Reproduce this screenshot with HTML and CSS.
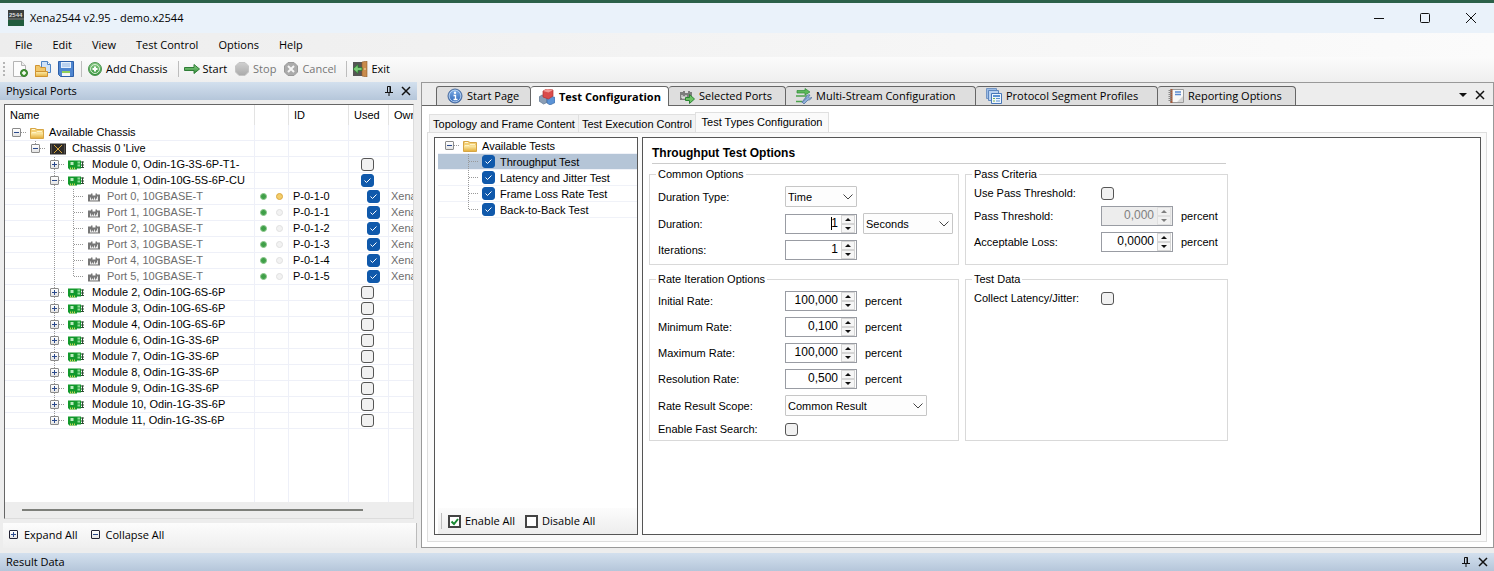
FILE: index.html
```
<!DOCTYPE html>
<html lang="en">
<head>
<meta charset="utf-8">
<title>Xena2544 v2.95 - demo.x2544</title>
<link rel="stylesheet" href="styles.css">
</head>
<body>
<svg class="sprite" aria-hidden="true">
  <defs>
    <linearGradient id="gGold" x1="0" y1="0" x2="0" y2="1"><stop offset="0" stop-color="#fdeeb0"/><stop offset="1" stop-color="#e6b23f"/></linearGradient>
    <linearGradient id="gGreen" x1="0" y1="0" x2="0" y2="1"><stop offset="0" stop-color="#8fce8a"/><stop offset="1" stop-color="#2f8f37"/></linearGradient>
    <linearGradient id="gBlue" x1="0" y1="0" x2="0" y2="1"><stop offset="0" stop-color="#7fb0ea"/><stop offset="1" stop-color="#2c62b4"/></linearGradient>
    <linearGradient id="gGrey" x1="0" y1="0" x2="0" y2="1"><stop offset="0" stop-color="#cfcfcf"/><stop offset="1" stop-color="#aaaaaa"/></linearGradient>
  </defs>
  <symbol id="i-new" viewBox="0 0 16 16"><path d="M1.500 .5h8l4 4v11h-12z" fill="#fcfcfc" stroke="#b4b4b4"/><path d="M9.500 .5v4h4" fill="#eee" stroke="#b4b4b4"/><circle cx="12" cy="12" r="3.500" fill="#4d9a3b" stroke="#2f7a28"/><path d="M12 10v4M10 12h4" stroke="#fff" stroke-width="1.500"/></symbol>
  <symbol id="i-open" viewBox="0 0 16 16"><path d="M6.500 .5h6l3 3v8h-9z" fill="#cfe2f8" stroke="#4d83c4"/><path d="M12.500 .5v3h3" fill="#fff" stroke="#4d83c4"/><path d="M.5 15.500v-11h4l1 2h5v9z" fill="#f2c76a" stroke="#d09432"/><path d="M.5 15.500v-5h12v5z" fill="url(#gGold)" stroke="#d09432"/></symbol>
  <symbol id="i-save" viewBox="0 0 16 16"><path d="M.5 .5h15v15h-13l-2-2z" fill="#4f86d0" stroke="#2d5fa8"/><path d="M3 1h10v6H3z" fill="#e5effb"/><path d="M4 3h8M4 5h8" stroke="#8fb4e4"/><path d="M4 10h8v5H4z" fill="#f4f6f8"/><path d="M4 10h8v2H4z" fill="#8fcf5a"/></symbol>
  <symbol id="i-add" viewBox="0 0 16 16"><circle cx="8" cy="8" r="6.500" fill="url(#gGreen)" stroke="#4d9552"/><circle cx="8" cy="8" r="4.500" fill="none" stroke="#d9efd6"/><path d="M8 5.500v5M5.500 8h5" stroke="#fff" stroke-width="2"/></symbol>
  <symbol id="i-start" viewBox="0 0 16 16"><path d="M.5 6.500h9.500v-3l5.500 4.500-5.500 4.500v-3H.5z" fill="url(#gGreen)" stroke="#2f7d36"/></symbol>
  <symbol id="i-stop" viewBox="0 0 16 16"><path d="M5 1.500h6l3.500 3.500v6l-3.500 3.500H5L1.500 11V5z" fill="url(#gGrey)" stroke="#c4c4c4"/></symbol>
  <symbol id="i-cancel" viewBox="0 0 16 16"><path d="M5 1.500h6l3.500 3.500v6l-3.500 3.500H5L1.500 11V5z" fill="#ababab" stroke="#999"/><path d="M5 5l6 6M11 5l-6 6" stroke="#f5f5f5" stroke-width="2"/></symbol>
  <symbol id="i-exit" viewBox="0 0 16 16"><path d="M1 1h9v14H1z" fill="#555"/><path d="M10 1l5-1v16l-5-1z" fill="#c98b4c" stroke="#8d5a28" stroke-width=".6"/><path d="M13 7v2" stroke="#f7e2a8"/><path d="M10 6.500H6V3.500L1 8l5 4.500v-3h4z" fill="#7ccb78" stroke="#2a7a31" stroke-width=".8"/></symbol>
  <symbol id="i-folder" viewBox="0 0 16 14"><path d="M1.500 12.500V2.500h5l1.500 1H14.500V12.500z" fill="#f3cf74" stroke="#d6a544"/><path d="M3 3.500h3" stroke="#fff6d5"/><path d="M2 6.500h12V12H2z" fill="url(#gGold)"/><path d="M3 6.500h4l1-1h5" fill="none" stroke="#fff3c4"/></symbol>
  <symbol id="i-chassis" viewBox="0 0 16 11"><path d="M0 0h16v11H0z" fill="#2d2a28"/><path d="M4 1.500l8 8M12 1.500l-8 8" stroke="#d6a53a"/><path d="M1.500 1v9M14.500 1v9" stroke="#575350"/></symbol>
  <symbol id="i-card" viewBox="0 0 16 9"><path d="M0 0h13v8H9v1H1V8H0z" fill="#12992c"/><path d="M2.500 1.500h3v3h-3z" fill="#bdecc0"/><path d="M2.500 7v2M4.500 7v2M6.500 7v2" stroke="#c9d95a"/><path d="M9.500 1h2.500v2H9.500zM9.500 4h2.500v2H9.500z" fill="#8bdc94"/><path d="M13 1.500h3M13 4.500h3M13 7h3M14.500 1v6.500" stroke="#2c4a31"/></symbol>
  <symbol id="i-port" viewBox="0 0 12 9"><path d="M0 2h3V1h1.500v2h3V1H9v1h3v7H0z" fill="#777"/><path d="M2.500 7.500V5M4.500 7.500V6M6.500 7.500V5M8.500 7.500V6M9.500 7.500V4M2 7.500h8" stroke="#fff" stroke-width=".8"/></symbol>
  <symbol id="i-info" viewBox="0 0 16 16"><circle cx="8" cy="8" r="7" fill="url(#gBlue)" stroke="#4c6c9c"/><circle cx="8" cy="8" r="5.800" fill="none" stroke="#c4d9f3" stroke-width=".8"/><circle cx="8" cy="4.800" r="1.200" fill="#fff"/><path d="M6.500 7.500H8.500V11.500M6.500 11.500h4" fill="none" stroke="#fff" stroke-width="1.300"/></symbol>
  <symbol id="i-cubes" viewBox="0 0 16 16"><path d="M0 8l3-2 5 1.500v6L4.500 15 0 12z" fill="#8a9db5" stroke="#60758f" stroke-width=".7"/><path d="M8 9l4-2 4 1.500v5L11 16l-3-2z" fill="#5b93d6" stroke="#3a69a3" stroke-width=".7"/><path d="M4 2l4-2 6 1v6l-4.500 3L4 8z" fill="#d94b4b" stroke="#b53030" stroke-width=".7"/><path d="M4 2l5.500 1.500L14 1 8 0z" fill="#f19a95"/></symbol>
  <symbol id="i-ports" viewBox="0 0 16 16"><path d="M1 4h3V3h2v2h3V3h2v1h2v8H1z" fill="#7d7d7d"/><path d="M3 10V7M5 10V8M7 10V7M3 10h5" stroke="#fff"/><path d="M6.500 9.500h4v-3l5 4.500-5 4.500v-3h-4z" fill="#6cc163" stroke="#2b8632"/></symbol>
  <symbol id="i-streams" viewBox="0 0 16 16"><path d="M1 2.500h8v-2l5 3.500-5 3V5H1z" fill="#5cb95a" stroke="#2e8a36" stroke-width=".7"/><path d="M0 8h12M0 13.500h6" stroke="#4da34d" stroke-width="1.500"/><path d="M6 14.500l5-5M10 9a3 3 0 0 1 4-2l-1.500 2 1.500 1.500 1.500-1.500A3 3 0 0 1 12 12l-4 4-2-2z" fill="#8fb0db" stroke="#55759f" stroke-width=".8"/></symbol>
  <symbol id="i-segments" viewBox="0 0 16 16"><path d="M.5 .5h10v10H.5z" fill="#9dbde6" stroke="#7395c4"/><path d="M2.500 2.500h10v10h-10z" fill="#b9d2f1" stroke="#5e87bf"/><path d="M5.500 5.500h10v10h-10z" fill="#eef5fd" stroke="#4677b8"/><path d="M7 8h7" stroke="#5c91d1" stroke-width="2"/><path d="M7 10.500h2M7 13h2" stroke="#75b451"/><path d="M10 10.500h4M10 13h4" stroke="#5c91d1"/></symbol>
  <symbol id="i-report" viewBox="0 0 16 16"><path d="M2.500 1.500h13v13h-13z" fill="#f8f8f8" stroke="#9a9a9a"/><path d="M3.500 1v14" stroke="#a35a3a" stroke-width="2"/><path d="M.5 2.500h3M.5 4.500h3M.5 6.500h3M.5 8.500h3M.5 10.500h3M.5 12.500h3" stroke="#888"/><path d="M7 4h6M7 6.500h6" stroke="#5b8ad0" stroke-width="1.500"/><path d="M9 14l6-6v6z" fill="#d5d5d5"/></symbol>
  <symbol id="i-pin" viewBox="0 0 8 10"><path d="M2.500 6V.5h3V6" fill="none" stroke="#111"/><path d="M5 .5V6M0 6.500h8M4 7v3" stroke="#111"/></symbol>
  <symbol id="i-x" viewBox="0 0 10 10"><path d="M1 1l8 8M9 1l-8 8" stroke="#111" stroke-width="1.500"/></symbol>
</svg>

<header class="titlebar">
  <svg class="app-icon" viewBox="0 0 16 16" role="img" aria-label="Xena2544"><path d="M0 0h16v16H0z" fill="#3c3f3e"/><path d="M0 10h16v6H0z" fill="#215c3e"/><path d="M0 9h16" stroke="#79837c"/><text x="1" y="7" class="app-icon-text">2544</text></svg>
  <h1 class="app-title">Xena2544 v2.95 - demo.x2544</h1>
  <div class="window-buttons">
    <button class="plain" aria-label="Minimize"><svg width="12" height="12"><path d="M1 6.500h10" stroke="#111"/></svg></button>
    <button class="plain" aria-label="Maximize"><svg width="12" height="12"><rect x="1.500" y="1.500" width="9" height="9" rx="1" fill="none" stroke="#111"/></svg></button>
    <button class="plain" aria-label="Close"><svg width="12" height="12"><path d="M1 1l10 10M11 1L1 11" stroke="#111"/></svg></button>
  </div>
</header>

<nav class="menubar">
  <button class="plain">File</button><button class="plain">Edit</button><button class="plain">View</button><button class="plain">Test Control</button><button class="plain">Options</button><button class="plain">Help</button>
</nav>

<div class="toolbar">
  <span class="grip"></span>
  <button class="plain tool" aria-label="New"><svg class="icon16"><use href="#i-new"/></svg></button>
  <button class="plain tool" aria-label="Open"><svg class="icon16"><use href="#i-open"/></svg></button>
  <button class="plain tool" aria-label="Save"><svg class="icon16"><use href="#i-save"/></svg></button>
  <span class="sep"></span>
  <button class="plain tool"><svg class="icon16"><use href="#i-add"/></svg>Add Chassis</button>
  <span class="sep wide"></span>
  <button class="plain tool"><svg class="icon16"><use href="#i-start"/></svg>Start</button>
  <button class="plain tool" disabled><svg class="icon16"><use href="#i-stop"/></svg>Stop</button>
  <button class="plain tool" disabled><svg class="icon16"><use href="#i-cancel"/></svg>Cancel</button>
  <span class="sep wide"></span>
  <button class="plain tool"><svg class="icon16"><use href="#i-exit"/></svg>Exit</button>
</div>

<main class="workspace">
  <section class="ports-panel">
    <div class="dock-bar"><h2>Physical Ports</h2><button class="plain" aria-label="Pin"><svg class="pin"><use href="#i-pin"/></svg></button><button class="plain" aria-label="Close"><svg class="cross"><use href="#i-x"/></svg></button></div>
    <div class="ports-box">
      <div class="ports-view">
        <table class="ports">
          <colgroup><col class="c-name"><col class="c-led"><col class="c-id"><col class="c-used"><col class="c-owner"></colgroup>
          <thead><tr><th>Name</th><th></th><th>ID</th><th>Used</th><th>Owner</th></tr></thead>
          <tbody>
            <tr><td><div class="node"><span class="g h"><button class="exp" aria-label="Collapse"></button></span><svg class="ic folder"><use href="#i-folder"/></svg>Available Chassis</div></td><td></td><td></td><td></td><td></td></tr>
            <tr><td><div class="node"><span class="g"></span><span class="g h vt"><button class="exp" aria-label="Collapse"></button></span><svg class="ic chassis"><use href="#i-chassis"/></svg>Chassis 0 'Live</div></td><td></td><td></td><td></td><td></td></tr>
            <tr><td><div class="node"><span class="g"></span><span class="g"></span><span class="g h v"><button class="exp plus" aria-label="Expand"></button></span><svg class="ic card"><use href="#i-card"/></svg>Module 0, Odin-1G-3S-6P-T1-</div></td><td></td><td></td><td><input type="checkbox" class="cb" aria-label="Use Module 0"></td><td></td></tr>
            <tr><td><div class="node"><span class="g"></span><span class="g"></span><span class="g h v"><button class="exp" aria-label="Collapse"></button></span><svg class="ic card"><use href="#i-card"/></svg>Module 1, Odin-10G-5S-6P-CU</div></td><td></td><td></td><td><input type="checkbox" class="cb" checked aria-label="Use Module 1"></td><td></td></tr>
            <tr class="port"><td><div class="node"><span class="g"></span><span class="g"></span><span class="g v"></span><span class="g h v"></span><svg class="ic jack"><use href="#i-port"/></svg>Port 0, 10GBASE-T</div></td><td><span class="leds"><i class="led green"></i><i class="led amber"></i></span></td><td class="pid">P-0-1-0</td><td><input type="checkbox" class="cb" checked aria-label="Use Port 0"></td><td>Xena</td></tr>
            <tr class="port"><td><div class="node"><span class="g"></span><span class="g"></span><span class="g v"></span><span class="g h v"></span><svg class="ic jack"><use href="#i-port"/></svg>Port 1, 10GBASE-T</div></td><td><span class="leds"><i class="led green"></i><i class="led"></i></span></td><td class="pid">P-0-1-1</td><td><input type="checkbox" class="cb" checked aria-label="Use Port 1"></td><td>Xena</td></tr>
            <tr class="port"><td><div class="node"><span class="g"></span><span class="g"></span><span class="g v"></span><span class="g h v"></span><svg class="ic jack"><use href="#i-port"/></svg>Port 2, 10GBASE-T</div></td><td><span class="leds"><i class="led green"></i><i class="led"></i></span></td><td class="pid">P-0-1-2</td><td><input type="checkbox" class="cb" checked aria-label="Use Port 2"></td><td>Xena</td></tr>
            <tr class="port"><td><div class="node"><span class="g"></span><span class="g"></span><span class="g v"></span><span class="g h v"></span><svg class="ic jack"><use href="#i-port"/></svg>Port 3, 10GBASE-T</div></td><td><span class="leds"><i class="led green"></i><i class="led"></i></span></td><td class="pid">P-0-1-3</td><td><input type="checkbox" class="cb" checked aria-label="Use Port 3"></td><td>Xena</td></tr>
            <tr class="port"><td><div class="node"><span class="g"></span><span class="g"></span><span class="g v"></span><span class="g h v"></span><svg class="ic jack"><use href="#i-port"/></svg>Port 4, 10GBASE-T</div></td><td><span class="leds"><i class="led green"></i><i class="led"></i></span></td><td class="pid">P-0-1-4</td><td><input type="checkbox" class="cb" checked aria-label="Use Port 4"></td><td>Xena</td></tr>
            <tr class="port"><td><div class="node"><span class="g"></span><span class="g"></span><span class="g v"></span><span class="g h vt"></span><svg class="ic jack"><use href="#i-port"/></svg>Port 5, 10GBASE-T</div></td><td><span class="leds"><i class="led green"></i><i class="led"></i></span></td><td class="pid">P-0-1-5</td><td><input type="checkbox" class="cb" checked aria-label="Use Port 5"></td><td>Xena</td></tr>
            <tr><td><div class="node"><span class="g"></span><span class="g"></span><span class="g h v"><button class="exp plus" aria-label="Expand"></button></span><svg class="ic card"><use href="#i-card"/></svg>Module 2, Odin-10G-6S-6P</div></td><td></td><td></td><td><input type="checkbox" class="cb" aria-label="Use Module 2"></td><td></td></tr>
            <tr><td><div class="node"><span class="g"></span><span class="g"></span><span class="g h v"><button class="exp plus" aria-label="Expand"></button></span><svg class="ic card"><use href="#i-card"/></svg>Module 3, Odin-10G-6S-6P</div></td><td></td><td></td><td><input type="checkbox" class="cb" aria-label="Use Module 3"></td><td></td></tr>
            <tr><td><div class="node"><span class="g"></span><span class="g"></span><span class="g h v"><button class="exp plus" aria-label="Expand"></button></span><svg class="ic card"><use href="#i-card"/></svg>Module 4, Odin-10G-6S-6P</div></td><td></td><td></td><td><input type="checkbox" class="cb" aria-label="Use Module 4"></td><td></td></tr>
            <tr><td><div class="node"><span class="g"></span><span class="g"></span><span class="g h v"><button class="exp plus" aria-label="Expand"></button></span><svg class="ic card"><use href="#i-card"/></svg>Module 6, Odin-1G-3S-6P</div></td><td></td><td></td><td><input type="checkbox" class="cb" aria-label="Use Module 6"></td><td></td></tr>
            <tr><td><div class="node"><span class="g"></span><span class="g"></span><span class="g h v"><button class="exp plus" aria-label="Expand"></button></span><svg class="ic card"><use href="#i-card"/></svg>Module 7, Odin-1G-3S-6P</div></td><td></td><td></td><td><input type="checkbox" class="cb" aria-label="Use Module 7"></td><td></td></tr>
            <tr><td><div class="node"><span class="g"></span><span class="g"></span><span class="g h v"><button class="exp plus" aria-label="Expand"></button></span><svg class="ic card"><use href="#i-card"/></svg>Module 8, Odin-1G-3S-6P</div></td><td></td><td></td><td><input type="checkbox" class="cb" aria-label="Use Module 8"></td><td></td></tr>
            <tr><td><div class="node"><span class="g"></span><span class="g"></span><span class="g h v"><button class="exp plus" aria-label="Expand"></button></span><svg class="ic card"><use href="#i-card"/></svg>Module 9, Odin-1G-3S-6P</div></td><td></td><td></td><td><input type="checkbox" class="cb" aria-label="Use Module 9"></td><td></td></tr>
            <tr><td><div class="node"><span class="g"></span><span class="g"></span><span class="g h v"><button class="exp plus" aria-label="Expand"></button></span><svg class="ic card"><use href="#i-card"/></svg>Module 10, Odin-1G-3S-6P</div></td><td></td><td></td><td><input type="checkbox" class="cb" aria-label="Use Module 10"></td><td></td></tr>
            <tr><td><div class="node"><span class="g"></span><span class="g"></span><span class="g h vt"><button class="exp plus" aria-label="Expand"></button></span><svg class="ic card"><use href="#i-card"/></svg>Module 11, Odin-1G-3S-6P</div></td><td></td><td></td><td><input type="checkbox" class="cb" aria-label="Use Module 11"></td><td></td></tr>
            <tr class="fill"><td></td><td></td><td></td><td></td><td></td></tr>
          </tbody>
        </table>
      </div>
      <div class="hscroll"><div class="thumb"></div></div>
    </div>
    <div class="tree-bar">
      <button class="plain tool"><span class="exp dark plus"></span>Expand All</button>
      <button class="plain tool"><span class="exp dark"></span>Collapse All</button>
    </div>
  </section>

  <section class="doc-panel">
    <div class="tabs">
      <button class="tab t-start"><svg class="icon16"><use href="#i-info"/></svg>Start Page</button>
      <button class="tab t-config active"><svg class="icon16"><use href="#i-cubes"/></svg>Test Configuration</button>
      <button class="tab t-ports"><svg class="icon16"><use href="#i-ports"/></svg>Selected Ports</button>
      <button class="tab t-multi"><svg class="icon16"><use href="#i-streams"/></svg>Multi-Stream Configuration</button>
      <button class="tab t-proto"><svg class="icon16"><use href="#i-segments"/></svg>Protocol Segment Profiles</button>
      <button class="tab t-report"><svg class="icon16"><use href="#i-report"/></svg>Reporting Options</button>
      <span class="tab-actions">
        <button class="plain" aria-label="Tab list"><svg width="8" height="4"><path d="M0 0h8L4 4z" fill="#111"/></svg></button>
        <button class="plain" aria-label="Close"><svg class="cross"><use href="#i-x"/></svg></button>
      </span>
    </div>
    <div class="doc-body">
      <div class="subtabs">
        <button class="subtab s-topo">Topology and Frame Content</button><button class="subtab s-exec">Test Execution Control</button><button class="subtab s-types active">Test Types Configuration</button>
      </div>
      <div class="page">
        <div class="tests">
          <div class="test-list">
            <div class="node"><span class="g h"><button class="exp" aria-label="Collapse"></button></span><svg class="ic folder"><use href="#i-folder"/></svg>Available Tests</div>
            <label class="node selected"><span class="g"></span><span class="g h v"></span><input type="checkbox" class="cb" checked>Throughput Test</label>
            <label class="node"><span class="g"></span><span class="g h v"></span><input type="checkbox" class="cb" checked>Latency and Jitter Test</label>
            <label class="node"><span class="g"></span><span class="g h v"></span><input type="checkbox" class="cb" checked>Frame Loss Rate Test</label>
            <label class="node"><span class="g"></span><span class="g h vt"></span><input type="checkbox" class="cb" checked>Back-to-Back Test</label>
          </div>
          <div class="test-bar">
            <span class="sep"></span>
            <button class="plain tool"><svg width="13" height="13"><path d="M1 1h11v11H1z" fill="#fff" stroke="#444" stroke-width="2"/><path d="M3.500 6.500l2.500 2.500 4-5" fill="none" stroke="#188a32" stroke-width="2"/></svg>Enable All</button>
            <button class="plain tool"><svg width="13" height="13"><path d="M1 1h11v11H1z" fill="#fff" stroke="#444" stroke-width="2"/></svg>Disable All</button>
          </div>
        </div>

        <form class="options">
          <h3>Throughput Test Options</h3>
          <div class="groups">
            <fieldset class="common">
              <legend>Common Options</legend>
              <div class="row"><label for="dtype">Duration Type:</label><select id="dtype" class="w-s"><option>Time</option></select></div>
              <div class="row"><label for="dur">Duration:</label><span class="spin"><input id="dur" class="caret" value="1"><span class="ud"><button type="button" aria-label="Up"></button><button type="button" class="down" aria-label="Down"></button></span></span><select class="w-m" aria-label="Duration unit"><option>Seconds</option></select></div>
              <div class="row"><label for="iter">Iterations:</label><span class="spin"><input id="iter" value="1"><span class="ud"><button type="button" aria-label="Up"></button><button type="button" class="down" aria-label="Down"></button></span></span></div>
            </fieldset>
            <fieldset>
              <legend>Pass Criteria</legend>
              <div class="row tick"><label for="upt">Use Pass Threshold:</label><input type="checkbox" class="cb" id="upt"></div>
              <div class="row"><label for="pt">Pass Threshold:</label><span class="spin off"><input id="pt" value="0,000" disabled><span class="ud"><button type="button" disabled aria-label="Up"></button><button type="button" class="down" disabled aria-label="Down"></button></span></span><span class="unit">percent</span></div>
              <div class="row"><label for="al">Acceptable Loss:</label><span class="spin"><input id="al" value="0,0000"><span class="ud"><button type="button" aria-label="Up"></button><button type="button" class="down" aria-label="Down"></button></span></span><span class="unit">percent</span></div>
            </fieldset>
            <fieldset>
              <legend>Rate Iteration Options</legend>
              <div class="row"><label for="r1">Initial Rate:</label><span class="spin"><input id="r1" value="100,000"><span class="ud"><button type="button" aria-label="Up"></button><button type="button" class="down" aria-label="Down"></button></span></span><span class="unit">percent</span></div>
              <div class="row"><label for="r2">Minimum Rate:</label><span class="spin"><input id="r2" value="0,100"><span class="ud"><button type="button" aria-label="Up"></button><button type="button" class="down" aria-label="Down"></button></span></span><span class="unit">percent</span></div>
              <div class="row"><label for="r3">Maximum Rate:</label><span class="spin"><input id="r3" value="100,000"><span class="ud"><button type="button" aria-label="Up"></button><button type="button" class="down" aria-label="Down"></button></span></span><span class="unit">percent</span></div>
              <div class="row"><label for="r4">Resolution Rate:</label><span class="spin"><input id="r4" value="0,500"><span class="ud"><button type="button" aria-label="Up"></button><button type="button" class="down" aria-label="Down"></button></span></span><span class="unit">percent</span></div>
              <div class="row"><label for="scope">Rate Result Scope:</label><select id="scope" class="w-l"><option>Common Result</option></select></div>
              <div class="row tick"><label for="fast">Enable Fast Search:</label><input type="checkbox" class="cb" id="fast"></div>
            </fieldset>
            <fieldset>
              <legend>Test Data</legend>
              <div class="row tick"><label for="lat">Collect Latency/Jitter:</label><input type="checkbox" class="cb" id="lat"></div>
            </fieldset>
          </div>
        </form>
      </div>
    </div>
  </section>
</main>

<footer class="dock-bar"><h2>Result Data</h2><button class="plain" aria-label="Pin"><svg class="pin"><use href="#i-pin"/></svg></button><button class="plain" aria-label="Close"><svg class="cross"><use href="#i-x"/></svg></button></footer>
</body>
</html>
```
FILE: styles.css
```
* { box-sizing: border-box; }

body {
  margin: 0;
  min-height: 100vh;
  display: flex;
  flex-direction: column;
  background: #ededed;
  color: #000;
  font: 11px/16px "Open Sans", "Noto Sans", sans-serif;
}

button, input, select { font: inherit; color: inherit; margin: 0; }
h1, h2, h3 { margin: 0; font-size: 11px; font-weight: 400; }
.sprite { position: absolute; width: 0; height: 0; }
svg { display: block; flex: none; }
.icon16 { width: 16px; height: 16px; }
.plain { border: 0; background: none; padding: 0; }
.pin { width: 8px; height: 10px; }
.cross { width: 10px; height: 10px; }

/* Window frame */
.titlebar {
  display: flex;
  align-items: center;
  gap: 6px;
  height: 33px;
  padding: 0 17px 0 8px;
  border-top: 3px solid #2c6149;
  background: #eaf2fa;
}
.app-icon { width: 16px; height: 16px; }
.app-icon-text { font: bold 6px "Liberation Sans", sans-serif; fill: #ddd; }
.app-title { flex: 1; }
.window-buttons { display: flex; gap: 34px; }

.menubar {
  display: flex;
  gap: 20px;
  height: 24px;
  padding-left: 15px;
  background: linear-gradient(to right, #ededed, #fbfbfb);
}

.toolbar {
  display: flex;
  align-items: center;
  gap: 7px;
  height: 25px;
  padding: 0 0 1px 3px;
  background: linear-gradient(#fbfbfb, #efefef);
}
.grip { width: 2px; height: 15px; background: repeating-linear-gradient(#b5b5b5 0 2px, transparent 2px 4px); }
.tool { display: flex; align-items: center; gap: 3px; }
.tool:disabled { color: #777; }
.sep { width: 1px; height: 16px; margin-right: -2px; background: #bdbdbd; }
.sep.wide { margin-left: 3px; }

.workspace { flex: 1; display: flex; gap: 4px; padding-bottom: 5px; }

.dock-bar {
  display: flex;
  align-items: center;
  gap: 8px;
  height: 18px;
  padding: 0 6px;
  background: linear-gradient(#d3e0ee, #b5c6da);
}
.dock-bar h2 { flex: 1; }

/* Ports tree */
.ports-panel { width: 417px; flex: none; display: flex; flex-direction: column; }
.ports-box {
  flex: 1;
  display: flex;
  flex-direction: column;
  margin: 4px 3px 4px 4px;
  border: 1px solid #dcdcdc;
  border-top-color: #666;
  border-left-color: #666;
  background: #fff;
  font: 11px/15px "Liberation Sans", Arial, sans-serif;
}
.ports-view { flex: 1; overflow: hidden; display: flex; }
.ports { table-layout: fixed; border-collapse: separate; border-spacing: 0; width: 100%; }
.c-name { width: 250px; }
.c-led { width: 34px; }
.c-id { width: 60px; }
.c-used { width: 40px; }
.ports th {
  height: 20px;
  padding: 0 0 0 5px;
  text-align: left;
  font-weight: 400;
  border-right: 1px solid #e3e3e3;
  overflow: hidden;
}
.ports td {
  height: 16px;
  padding: 0;
  border-right: 1px solid #eef0f8;
  border-bottom: 1px solid #eef0f8;
  white-space: nowrap;
  overflow: hidden;
}
.ports th:last-child, .ports td:last-child { border-right: 0; }
.ports td:last-child { padding-left: 2px; }
.ports .fill td { height: auto; border-bottom: 0; }
.ports .cb { margin-left: 12px; }
.ports .port .cb { margin-left: 18px; }
.port { color: #6d6d6d; }
.ports .pid { padding-left: 4px; color: #000; }

.node { display: flex; align-items: center; height: 15px; padding-left: 2px; white-space: nowrap; }
.g {
  width: 19px;
  height: 15px;
  flex: none;
  display: flex;
  align-items: center;
  padding-left: 5px;
  --v: linear-gradient(transparent, transparent);
  --h: linear-gradient(transparent, transparent);
  --vh: 100%;
  background: var(--v) 9px 0 / 1px var(--vh) no-repeat, var(--h) 10px 7px / 11px 1px no-repeat;
}
.v, .vt { --v: repeating-linear-gradient(#999 0 1px, transparent 1px 2px); }
.vt { --vh: 8px; }
.h { --h: repeating-linear-gradient(to right, #999 0 1px, transparent 1px 2px); }
.exp {
  width: 9px;
  height: 9px;
  flex: none;
  padding: 0;
  border: 1px solid #8a8a8a;
  border-radius: 1px;
  --p: transparent;
  background:
    linear-gradient(#2b4a8c, #2b4a8c) center / 5px 1px no-repeat,
    linear-gradient(var(--p), var(--p)) center / 1px 5px no-repeat,
    linear-gradient(#fff, #e4e4e4);
}
.plus { --p: #2b4a8c; }
.exp.dark { border-color: #223; }
.ic { height: 14px; }
.folder { width: 16px; margin: 0 4px 0 3px; }
.chassis { width: 16px; margin: 0 6px 0 5px; }
.card { width: 16px; margin: 0 8px 0 4px; }
.jack { width: 12px; margin: 0 7px 0 5px; }

.leds { display: flex; gap: 9px; padding-left: 5px; }
.led { width: 7px; height: 7px; border-radius: 4px; border: 1px solid #e0e0e0; background: #f2f2f2; }
.green { border-color: #8cc78c; background: #3f9f48; }
.amber { border-color: #dba83f; background: #f3cd6b; }

.cb {
  appearance: none;
  display: block;
  flex: none;
  width: 13px;
  height: 13px;
  border: 1px solid #555;
  border-radius: 3px;
  background: #f1f1f1;
}
.cb:checked {
  border-color: #1059ab;
  background: #1059ab url("data:image/svg+xml,%3Csvg xmlns='http://www.w3.org/2000/svg' viewBox='0 0 11 11'%3E%3Cpath d='M2.500 5.500l2 2 4-4' fill='none' stroke='%23fff'/%3E%3C/svg%3E") center / 11px 11px;
}

.hscroll { height: 16px; padding: 7px 50px 0 17px; background: #ededed; }
.thumb { height: 2px; background: #7d7f7a; }

.tree-bar {
  display: flex;
  gap: 13px;
  height: 25px;
  margin-left: 3px;
  padding: 0 0 2px 6px;
  border-right: 1px solid #bbb;
  background: linear-gradient(#fcfcfc, #efefef);
}
.tree-bar .tool { gap: 6px; }

/* Document area */
.doc-panel { flex: 1; min-width: 0; display: flex; flex-direction: column; border: 1px solid #999; background: #fff; }
.tabs { display: flex; align-items: flex-end; height: 23px; padding-left: 14px; border-bottom: 1px solid #666; background: #ededed; }
.tab {
  display: flex;
  align-items: center;
  gap: 4px;
  height: 19px;
  padding: 0 0 0 10px;
  white-space: nowrap;
  border: 1px solid #666;
  border-left-width: 0;
  border-bottom: 0;
  border-radius: 3px 4px 0 0;
  background: #dedede;
}
.tab.active { height: 20px; margin-bottom: -1px; padding-left: 8px; background: #fff; font-weight: 700; }
.t-start { width: 95px; border-left-width: 1px; }
.t-config { width: 138px; }
.t-ports { width: 117px; }
.t-multi { width: 190px; }
.t-proto { width: 182px; }
.t-report { width: 138px; }
.tab-actions { display: flex; align-items: center; gap: 8px; height: 20px; margin-left: auto; padding-right: 8px; }

.doc-body { flex: 1; display: flex; flex-direction: column; padding: 6px 6px 5px 5px; font: 11px/14px "Liberation Sans", Arial, sans-serif; }
.subtabs { display: flex; align-items: flex-end; height: 20px; padding-left: 2px; }
.subtab { height: 18px; padding: 0; white-space: nowrap; border: 1px solid #e0e0e0; border-bottom: 0; background: #f2f2f2; }
.subtab.active { height: 21px; margin-bottom: -1px; padding-bottom: 2px; background: #fafafa; }
.s-topo { width: 149px; border-right: 0; }
.s-exec { width: 117px; border-right: 0; }
.s-types { width: 134px; }
.page { flex: 1; display: flex; gap: 4px; padding: 4px 5px 6px 6px; border: 1px solid #dedede; background: #fafafa; }
.tests, .options { border: 1px solid #555; background: #fff; }
.tests { width: 204px; flex: none; display: flex; flex-direction: column; padding-left: 3px; }
.test-list { flex: 1; }
.test-list .node { height: 16px; border-bottom: 1px solid #f0f2f8; }
.test-list .selected { background: #b5c5d7; }
.test-list .cb { margin: 0 5px 0 4px; }
.test-bar { display: flex; align-items: center; gap: 10px; height: 26px; padding-left: 3px; background: linear-gradient(#fcfcfc, #ededed); font: 11px/16px "Open Sans", sans-serif; }
.test-bar .sep { margin-right: -4px; }
.test-bar .tool { gap: 4px; }

/* Options form */
.options { flex: 1; min-width: 0; padding: 8px 6px; }
.options h3 { width: 574px; margin: 0 3px; height: 18px; font-size: 12px; line-height: 14px; border-bottom: 1px solid #ccc; font-weight: 700; }
.groups { display: grid; grid-template-columns: 310px 263px; gap: 7px 6px; padding-top: 3px; }
fieldset { display: flex; flex-direction: column; gap: 6px; min-width: 0; margin: 0; padding: 5px 8px 4px; border: 1px solid #d9d9d9; }
legend { height: 14px; margin-left: -2px; padding: 0 2px; }
.row { display: flex; align-items: center; min-height: 20px; }
.row.tick { min-height: 14px; }
.row label { width: 127px; flex: none; }
.unit { margin-left: 8px; }
.spin { display: flex; flex: none; width: 72px; height: 20px; border: 1px solid #999ca3; background: #fff; }
.spin input { flex: 1; min-width: 0; padding: 0 3px 2px 0; border: 0; background: none; text-align: right; font-size: 12px; }
.spin .caret { background: linear-gradient(#000, #000) right 9px top 2px / 1px 13px no-repeat; }
.ud { display: flex; flex-direction: column; width: 14px; margin-right: 1px; }
.ud button {
  flex: 1;
  padding: 0;
  border: 1px solid #d5d5d5;
  background: #f6f6f6 url("data:image/svg+xml,%3Csvg xmlns='http://www.w3.org/2000/svg' viewBox='0 0 6 3'%3E%3Cpath d='M0 3l3-3 3 3z' fill='%23111'/%3E%3C/svg%3E") center / 6px 3px no-repeat;
}
.ud .down { transform: rotate(180deg); }
.off { background: #ededed; color: #808080; }
.off button { opacity: 0.5; }
select {
  appearance: none;
  flex: none;
  height: 21px;
  padding: 0 20px 0 2px;
  border: 1px solid #c6c6c6;
  border-radius: 1px;
  background: #fdfdfd url("data:image/svg+xml,%3Csvg xmlns='http://www.w3.org/2000/svg' viewBox='0 0 10 6'%3E%3Cpath d='M.5 .5l4.500 4.500 4.500-4.500' fill='none' stroke='%23444'/%3E%3C/svg%3E") right 3px center / 10px 6px no-repeat;
}
.w-s { width: 72px; }
.w-m { width: 90px; margin-left: 6px; }
.w-l { width: 142px; }
```
